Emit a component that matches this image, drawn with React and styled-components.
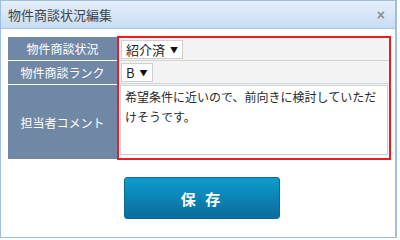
import React from 'react';
import styled, { createGlobalStyle } from 'styled-components';

const GlobalStyle = createGlobalStyle`
  html, body {
    margin: 0;
    padding: 0;
    background: #ffffff;
  }
  body {
    font-family: "Liberation Sans", "Noto Sans CJK JP", sans-serif;
  }
`;

const App = () => {
  return (
    <>
      <GlobalStyle />
      <Dialog>
        <TitleBar>
          <Title>物件商談状況編集</Title>
          <Close>×</Close>
        </TitleBar>
        <Body>
          <Form>
            <LabelCol>
              <Label $h={23}>物件商談状況</Label>
              <Label $h={23}>物件商談ランク</Label>
              <Label $h={74} $last>担当者コメント</Label>
            </LabelCol>
            <ValueCol>
              <ValueRow $h={23}>
                <Select>
                  紹介済<Arrow>▼</Arrow>
                </Select>
              </ValueRow>
              <ValueRow $h={23}>
                <Select>
                  B<Arrow>▼</Arrow>
                </Select>
              </ValueRow>
              <ValueRow $h={74} $last>
                <Comment>
                  希望条件に近いので、前向きに検討していただけそうです。
                </Comment>
              </ValueRow>
            </ValueCol>
          </Form>
          <Footer>
            <SaveButton>保 存</SaveButton>
          </Footer>
        </Body>
      </Dialog>
    </>
  );
};

export default App;

const Dialog = styled.div`
  width: 397px;
  height: 238px;
  box-sizing: border-box;
  border: 1px solid #9fbfe2;
  border-right-width: 2px;
  background: #ffffff;
  display: flex;
  flex-direction: column;
`;

const TitleBar = styled.div`
  height: 28px;
  box-sizing: border-box;
  display: flex;
  align-items: center;
  justify-content: space-between;
  padding: 0 10px 0 7px;
  background: linear-gradient(#e6effa, #c8dcf3);
  border-bottom: 1px solid #a8c4e6;
`;

const Title = styled.span`
  font-family: "Noto Sans CJK JP", sans-serif;
  font-size: 13px;
  color: #444444;
`;

const Close = styled.span`
  font-family: "Liberation Sans", sans-serif;
  font-size: 14px;
  font-weight: bold;
  color: #8a8e94;
  line-height: 1;
`;

const Body = styled.div`
  padding: 8px 6px 0 7px;
  display: flex;
  flex-direction: column;
`;

const Form = styled.div`
  display: flex;
  width: 383px;
`;

const LabelCol = styled.div`
  width: 109px;
  display: flex;
  flex-direction: column;
  background: #ffffff;
`;

const Label = styled.div`
  height: ${p => p.$h}px;
  box-sizing: border-box;
  display: flex;
  align-items: center;
  justify-content: center;
  background: #7088a6;
  color: #ffffff;
  font-family: "Noto Sans CJK JP", sans-serif;
  font-size: 12px;
  margin-bottom: ${p => (p.$last ? 0 : 1)}px;
`;

const ValueCol = styled.div`
  flex: 1;
  display: flex;
  flex-direction: column;
  border: 2px solid #ec1c24;
  margin-top: -1px;
  margin-bottom: -1px;
`;

const ValueRow = styled.div`
  height: ${p => p.$h - (p.$last ? 2 : 0)}px;
  box-sizing: border-box;
  display: flex;
  align-items: ${p => (p.$last ? 'stretch' : 'center')};
  padding: ${p => (p.$last ? '1px' : '0 2px')};
  background: #f3f3f3;
  border-bottom: ${p => (p.$last ? 'none' : '1px solid #d4d4d4')};
`;

const Select = styled.div`
  height: 19px;
  box-sizing: border-box;
  display: flex;
  align-items: center;
  gap: 5px;
  padding: 0 4px;
  background: #ffffff;
  border: 1px solid #cfcfcf;
  font-family: "Noto Sans CJK JP", sans-serif;
  font-size: 13px;
  color: #222222;
`;

const Arrow = styled.span`
  font-size: 8px;
  color: #111111;
`;

const Comment = styled.div`
  flex: 1;
  box-sizing: border-box;
  background: #ffffff;
  border: 1px solid #c9d3dd;
  padding: 1px 4px;
  font-family: "Noto Sans CJK JP", sans-serif;
  font-size: 12px;
  line-height: 20px;
  color: #2a2a2a;
`;

const Footer = styled.div`
  display: flex;
  padding: 18px 0 0 116px;
`;

const SaveButton = styled.button`
  width: 156px;
  height: 42px;
  border: 1px solid #0a6a98;
  border-radius: 3px;
  background: linear-gradient(#0b9ccd, #0a6c9c);
  color: #ffffff;
  font-family: "Noto Sans CJK JP", sans-serif;
  font-size: 15px;
  font-weight: bold;
  letter-spacing: 3px;
  padding: 0;
`;
